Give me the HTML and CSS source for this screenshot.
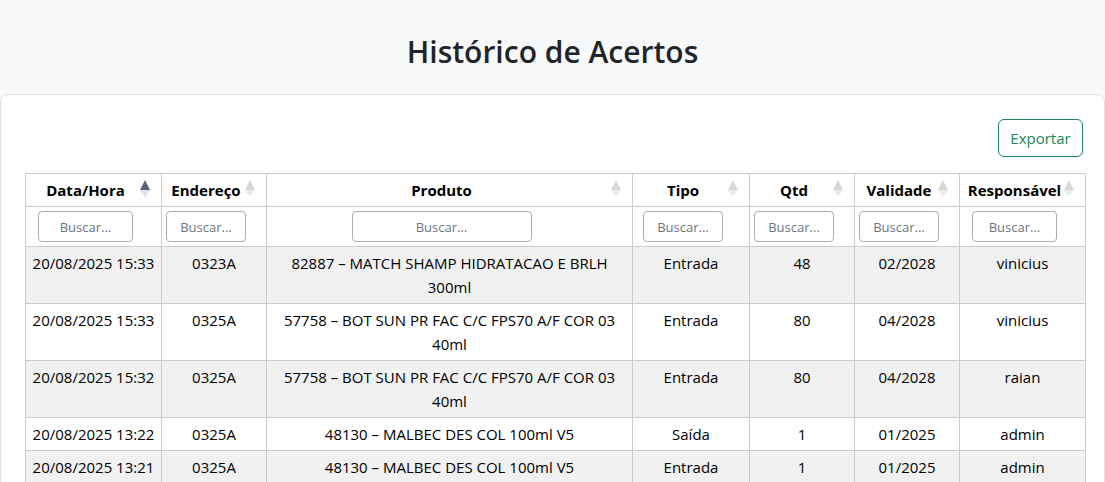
FILE: index.html
```html
<!DOCTYPE html>
<html lang="pt-BR">
<head>
<meta charset="utf-8">
<title>Histórico de Acertos</title>
<link rel="stylesheet" href="styles.css">
</head>
<body>
<header class="page-header">
  <h1 class="page-title">Histórico de Acertos</h1>
</header>
<main class="card">
  <div class="toolbar">
    <button class="btn-export" type="button">Exportar</button>
  </div>
  <table class="grid">
    <colgroup>
      <col class="c-data"><col class="c-end"><col class="c-prod"><col class="c-tipo"><col class="c-qtd"><col class="c-val"><col class="c-resp">
    </colgroup>
    <thead>
      <tr class="head-row">
        <th>Data/Hora<span class="sort active"><i class="up"></i><i class="down"></i></span></th>
        <th>Endereço<span class="sort"><i class="up"></i><i class="down"></i></span></th>
        <th>Produto<span class="sort"><i class="up"></i><i class="down"></i></span></th>
        <th>Tipo<span class="sort"><i class="up"></i><i class="down"></i></span></th>
        <th>Qtd<span class="sort"><i class="up"></i><i class="down"></i></span></th>
        <th>Validade<span class="sort"><i class="up"></i><i class="down"></i></span></th>
        <th>Responsável<span class="sort"><i class="up"></i><i class="down"></i></span></th>
      </tr>
      <tr class="filter-row">
        <th><input class="search w-data" placeholder="Buscar..."></th>
        <th><input class="search w-sm" placeholder="Buscar..."></th>
        <th><input class="search w-prod" placeholder="Buscar..."></th>
        <th><input class="search w-sm" placeholder="Buscar..."></th>
        <th><input class="search w-sm" placeholder="Buscar..."></th>
        <th><input class="search w-sm" placeholder="Buscar..."></th>
        <th><input class="search w-resp" placeholder="Buscar..."></th>
      </tr>
    </thead>
    <tbody>
      <tr>
        <td>20/08/2025 15:33</td><td>0323A</td><td>82887 – MATCH SHAMP HIDRATACAO E BRLH 300ml</td><td>Entrada</td><td>48</td><td>02/2028</td><td>vinicius</td>
      </tr>
      <tr>
        <td>20/08/2025 15:33</td><td>0325A</td><td>57758 – BOT SUN PR FAC C/C FPS70 A/F COR 03 40ml</td><td>Entrada</td><td>80</td><td>04/2028</td><td>vinicius</td>
      </tr>
      <tr>
        <td>20/08/2025 15:32</td><td>0325A</td><td>57758 – BOT SUN PR FAC C/C FPS70 A/F COR 03 40ml</td><td>Entrada</td><td>80</td><td>04/2028</td><td>raian</td>
      </tr>
      <tr>
        <td>20/08/2025 13:22</td><td>0325A</td><td>48130 – MALBEC DES COL 100ml V5</td><td>Saída</td><td>1</td><td>01/2025</td><td>admin</td>
      </tr>
      <tr>
        <td>20/08/2025 13:21</td><td>0325A</td><td>48130 – MALBEC DES COL 100ml V5</td><td>Entrada</td><td>1</td><td>01/2025</td><td>admin</td>
      </tr>
    </tbody>
  </table>
</main>
</body>
</html>
```
FILE: styles.css
```css
* { box-sizing: border-box; }
html, body { margin: 0; }
body {
  background: #f8f9fa;
  color: #212529;
  font-family: "Open Sans", "Noto Sans", "Liberation Sans", sans-serif;
  font-size: 15px;
  line-height: 24px;
  overflow: hidden;
}
.page-header {
  height: 94px;
  display: flex;
  align-items: center;
  justify-content: center;
  padding-top: 10px;
}
.page-title {
  margin: 0;
  font-size: 30px;
  font-weight: 600;
  line-height: 36px;
  color: #212529;
}
.card {
  background: #fff;
  border: 1px solid #dee2e6;
  border-radius: 8px;
  padding: 24px;
  width: 1105px;
  min-height: 400px;
}
.toolbar {
  display: flex;
  justify-content: flex-end;
  margin-bottom: 16px;
  margin-right: -3px;
}
.btn-export {
  font-family: inherit;
  font-size: 15px;
  line-height: 24px;
  height: 38px;
  width: 85px;
  padding: 6px 0;
  background: #fff;
  color: #198754;
  border: 1px solid #198754;
  border-radius: 6px;
}
.grid {
  border-collapse: collapse;
  table-layout: fixed;
  width: 1061px;
}
.c-data { width: 136px; }
.c-end { width: 105px; }
.c-prod { width: 366px; }
.c-tipo { width: 117px; }
.c-qtd { width: 105px; }
.c-val { width: 105px; }
.c-resp { width: 126px; }
.grid th, .grid td {
  border: 1px solid #cccccc;
  text-align: center;
  vertical-align: top;
}
.grid th {
  padding: 4px 20px 4px 4px;
  position: relative;
  font-weight: 700;
  color: #000;
  white-space: nowrap;
}
.grid td {
  padding: 4px 3px;
  color: #000;
}
.grid tbody tr:nth-child(odd) td { background: #f1f1f1; }
.sort {
  position: absolute;
  right: 11px;
  top: 6px;
  width: 10px;
  height: 18px;
}
.sort i {
  position: absolute;
  left: 0;
  width: 0;
  height: 0;
  border-left: 5px solid transparent;
  border-right: 5px solid transparent;
}
.sort .up { top: 0; border-bottom: 10px solid #d9d9d9; }
.sort .down { top: 10px; border-top: 7px solid #ebebeb; }
.sort.active .up { border-bottom-color: #5a6274; }
.sort.active .down { border-top-color: #d6e4f6; }
.filter-row th { height: 40px; }
.search {
  display: block;
  margin: 0 auto;
  height: 31px;
  padding: 4px 8px;
  font-family: inherit;
  font-size: 13px;
  line-height: 21px;
  text-align: center;
  color: #495057;
  background: #fff;
  border: 1px solid #a9adb3;
  border-radius: 4px;
}
.search::placeholder { color: #6c757d; }
.w-data { width: 95px; }
.w-sm { width: 80px; }
.w-prod { width: 180px; }
.w-resp { width: 85px; }
```
